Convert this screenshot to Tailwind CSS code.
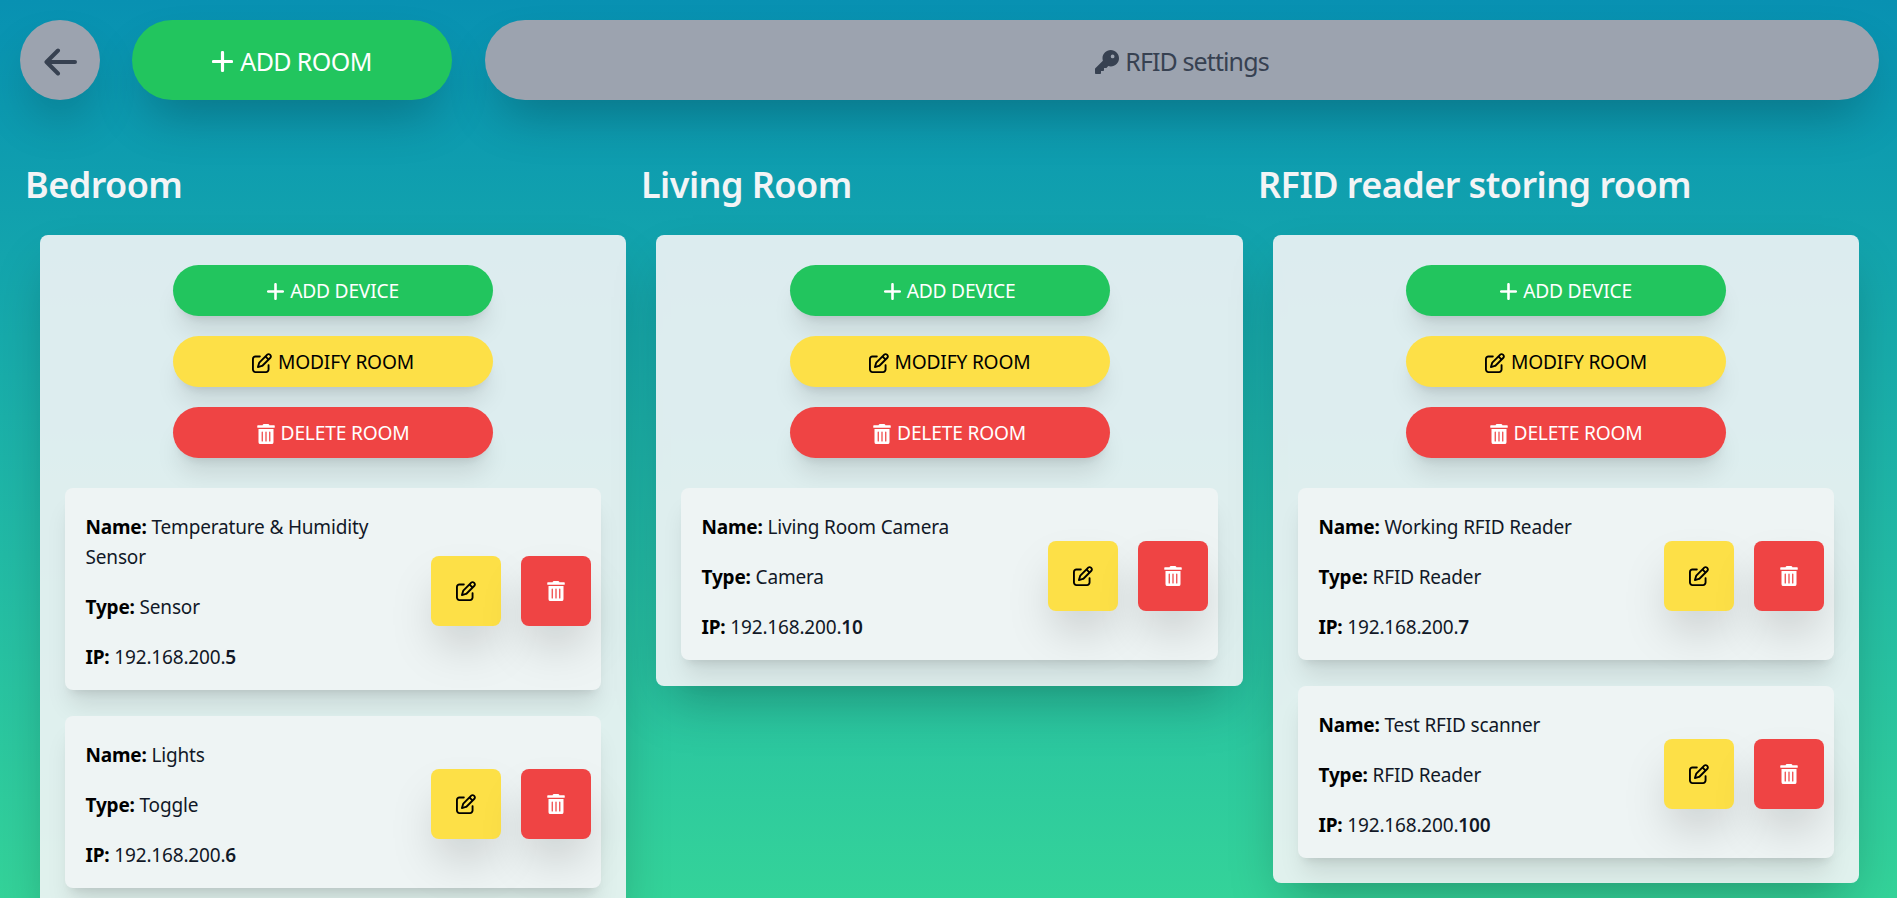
<!DOCTYPE html>
<html lang="en">
<head>
    <meta charset="UTF-8">
    <title>Rooms</title>
    <script src="https://cdn.jsdelivr.net/npm/@tailwindcss/browser@4"></script>
</head>
<body class="h-[898px] overflow-hidden bg-gradient-to-b from-[#0891b2] to-[#34d399] font-['Noto_Sans',sans-serif]">

    <!-- Shared icons -->
    <svg class="hidden">
        <symbol id="plus" viewBox="0 0 21 21"><path d="M10.500 1.500V19.500M1.500 10.500H19.500" fill="none" stroke="currentColor" stroke-width="3.200" stroke-linecap="round"/></symbol>
        <symbol id="edit" viewBox="0 0 512 512"><path fill="currentColor" d="M441 58.900L453.100 71c9.400 9.400 9.400 24.600 0 33.900L424 134.100 377.900 88 407 58.900c9.400-9.400 24.600-9.400 33.900 0zM209.800 256.200L344 121.900 390.100 168 255.800 302.200c-2.900 2.900-6.500 5-10.400 6.100l-58.500 16.700 16.700-58.500c1.100-3.900 3.200-7.500 6.100-10.400zM373.100 25L175.800 222.200c-8.700 8.700-15 19.400-18.300 31.100l-28.600 100c-2.400 8.400-.1 17.400 6.100 23.600s15.200 8.500 23.600 6.100l100-28.600c11.800-3.400 22.500-9.700 31.100-18.300L487 138.900c28.100-28.100 28.100-73.700 0-101.800L474.900 25C446.800-3.100 401.200-3.100 373.100 25zM88 64C39.400 64 0 103.400 0 152V424c0 48.600 39.400 88 88 88H360c48.600 0 88-39.400 88-88V312c0-13.300-10.700-24-24-24s-24 10.700-24 24V424c0 22.100-17.900 40-40 40H88c-22.100 0-40-17.900-40-40V152c0-22.100 17.900-40 40-40H200c13.300 0 24-10.700 24-24s-10.700-24-24-24H88z"/></symbol>
        <symbol id="trash" viewBox="0 0 448 512"><path fill="currentColor" d="M32 464a48 48 0 0 0 48 48h288a48 48 0 0 0 48-48V128H32zm272-256a16 16 0 0 1 32 0v224a16 16 0 0 1-32 0zm-96 0a16 16 0 0 1 32 0v224a16 16 0 0 1-32 0zm-96 0a16 16 0 0 1 32 0v224a16 16 0 0 1-32 0zM432 32H312l-9.400-18.700A24 24 0 0 0 281.100 0H166.800a23.720 23.720 0 0 0-21.400 13.300L136 32H16A16 16 0 0 0 0 48v32a16 16 0 0 0 16 16h416a16 16 0 0 0 16-16V48a16 16 0 0 0-16-16z"/></symbol>
    </svg>

    <!-- Top bar -->
    <div class="flex gap-8 pt-5 pl-5 pr-[18px]">
        <button class="w-20 h-20 shrink-0 rounded-full bg-[#9ca3af] shadow-2xl flex items-center justify-center pt-[4px]">
            <svg class="w-[33px] h-[28px] text-[#374151]" viewBox="0 0 33 28" fill="none" stroke="currentColor" stroke-width="4" stroke-linecap="round" stroke-linejoin="round"><path d="M31 14H3M14 2.500L2.500 14L14 25.500"/></svg>
        </button>
        <button class="w-80 h-20 shrink-0 rounded-full bg-[#22c55e] text-white text-[25px] shadow-2xl flex items-center justify-center gap-[7px] pt-[3px]">
            <svg class="w-[21px] h-[21px]"><use href="#plus"/></svg>
            <span class="tracking-[-0.6px]">ADD ROOM</span>
        </button>
        <button class="grow h-20 ml-px rounded-full bg-[#9ca3af] text-[#374151] text-[25px] shadow-2xl flex items-center justify-center gap-[6px] pt-[3px]">
            <svg class="w-6 h-6" viewBox="0 0 512 512" fill="currentColor"><path d="M336 352c97.200 0 176-78.800 176-176S433.200 0 336 0S160 78.800 160 176c0 18.700 2.900 36.800 8.300 53.700L7 391c-4.500 4.500-7 10.600-7 17v80c0 13.300 10.700 24 24 24h80c13.300 0 24-10.700 24-24V448h40c13.300 0 24-10.700 24-24V384h40c6.400 0 12.500-2.500 17-7l33.300-33.300c16.900 5.400 35 8.300 53.700 8.300zM376 96a40 40 0 1 1 0 80 40 40 0 1 1 0-80z"/></svg>
            <span class="tracking-[-0.9px]">RFID settings</span>
        </button>
    </div>

    <!-- Rooms -->
    <div class="grid grid-cols-[616px_617px_617px] items-start pl-[25px] mt-[58px]">

        <!-- Bedroom -->
        <div>
            <h2 class="text-4xl leading-[54px] font-semibold text-[#f3f4f6] tracking-[-0.55px]">Bedroom</h2>
            <div class="w-[586px] ml-[15px] mt-[23px] p-[25px] pt-[30px] rounded-lg bg-[#f3f4f6]/90 shadow-2xl">
                <div class="flex flex-col items-center gap-5">
                    <button class="w-80 h-[51px] rounded-full bg-[#22c55e] text-white text-[19.2px] shadow-xl flex items-center justify-center gap-[6px] pt-[2px]"><svg class="w-[17px] h-[17px]"><use href="#plus"/></svg><span class="tracking-[-0.2px]">ADD DEVICE</span></button>
                    <button class="w-80 h-[51px] rounded-full bg-[#fde047] text-black text-[19.2px] shadow-xl flex items-center justify-center gap-[6px] pt-[2px]"><svg class="w-5 h-5"><use href="#edit"/></svg><span class="tracking-[-0.2px]">MODIFY ROOM</span></button>
                    <button class="w-80 h-[51px] rounded-full bg-[#ef4444] text-white text-[19.2px] shadow-xl flex items-center justify-center gap-[6px] pt-[2px]"><svg class="w-[18px] h-5"><use href="#trash"/></svg><span class="tracking-[-0.2px]">DELETE ROOM</span></button>
                </div>
                <div class="mt-[30px] flex flex-col gap-[26px]">
                    <div class="flex items-center justify-between rounded-lg bg-[#eef4f4] shadow-xl pl-[20.5px] pr-[10px] pt-[24px] pb-[18px]">
                        <div class="w-[335px] flex flex-col gap-5 text-[19px] leading-[30px] text-[#111827] tracking-[-0.17px]">
                            <p><b class="font-bold text-black">Name:</b> Temperature &amp; Humidity<br>Sensor</p>
                            <p><b class="font-bold text-black">Type:</b> Sensor</p>
                            <p><b class="font-bold text-black">IP:</b> 192.168.200.<span class="font-semibold">5</span></p>
                        </div>
                        <div class="flex gap-5 -mt-[3px]">
                            <button class="w-[70px] h-[70px] rounded-lg bg-[#fde047] text-black shadow-2xl flex items-center justify-center"><svg class="w-5 h-5"><use href="#edit"/></svg></button>
                            <button class="w-[70px] h-[70px] rounded-lg bg-[#ef4444] text-white shadow-2xl flex items-center justify-center"><svg class="w-[18px] h-5"><use href="#trash"/></svg></button>
                        </div>
                    </div>
                    <div class="flex items-center justify-between rounded-lg bg-[#eef4f4] shadow-xl pl-[20.5px] pr-[10px] pt-[24px] pb-[18px]">
                        <div class="w-[335px] flex flex-col gap-5 text-[19px] leading-[30px] text-[#111827] tracking-[-0.17px]">
                            <p><b class="font-bold text-black">Name:</b> Lights</p>
                            <p><b class="font-bold text-black">Type:</b> Toggle</p>
                            <p><b class="font-bold text-black">IP:</b> 192.168.200.<span class="font-semibold">6</span></p>
                        </div>
                        <div class="flex gap-5 -mt-[3px]">
                            <button class="w-[70px] h-[70px] rounded-lg bg-[#fde047] text-black shadow-2xl flex items-center justify-center"><svg class="w-5 h-5"><use href="#edit"/></svg></button>
                            <button class="w-[70px] h-[70px] rounded-lg bg-[#ef4444] text-white shadow-2xl flex items-center justify-center"><svg class="w-[18px] h-5"><use href="#trash"/></svg></button>
                        </div>
                    </div>
                </div>
            </div>
        </div>

        <!-- Living Room -->
        <div>
            <h2 class="text-4xl leading-[54px] font-semibold text-[#f3f4f6] tracking-[-0.55px]">Living Room</h2>
            <div class="w-[587px] ml-[15px] mt-[23px] p-[25px] pt-[30px] pb-[26px] rounded-lg bg-[#f3f4f6]/90 shadow-2xl">
                <div class="flex flex-col items-center gap-5">
                    <button class="w-80 h-[51px] rounded-full bg-[#22c55e] text-white text-[19.2px] shadow-xl flex items-center justify-center gap-[6px] pt-[2px]"><svg class="w-[17px] h-[17px]"><use href="#plus"/></svg><span class="tracking-[-0.2px]">ADD DEVICE</span></button>
                    <button class="w-80 h-[51px] rounded-full bg-[#fde047] text-black text-[19.2px] shadow-xl flex items-center justify-center gap-[6px] pt-[2px]"><svg class="w-5 h-5"><use href="#edit"/></svg><span class="tracking-[-0.2px]">MODIFY ROOM</span></button>
                    <button class="w-80 h-[51px] rounded-full bg-[#ef4444] text-white text-[19.2px] shadow-xl flex items-center justify-center gap-[6px] pt-[2px]"><svg class="w-[18px] h-5"><use href="#trash"/></svg><span class="tracking-[-0.2px]">DELETE ROOM</span></button>
                </div>
                <div class="mt-[30px] flex flex-col gap-[26px]">
                    <div class="flex items-center justify-between rounded-lg bg-[#eef4f4] shadow-xl pl-[20.5px] pr-[10px] pt-[24px] pb-[18px]">
                        <div class="w-[335px] flex flex-col gap-5 text-[19px] leading-[30px] text-[#111827] tracking-[-0.17px]">
                            <p><b class="font-bold text-black">Name:</b> Living Room Camera</p>
                            <p><b class="font-bold text-black">Type:</b> Camera</p>
                            <p><b class="font-bold text-black">IP:</b> 192.168.200.<span class="font-semibold">10</span></p>
                        </div>
                        <div class="flex gap-5 -mt-[3px]">
                            <button class="w-[70px] h-[70px] rounded-lg bg-[#fde047] text-black shadow-2xl flex items-center justify-center"><svg class="w-5 h-5"><use href="#edit"/></svg></button>
                            <button class="w-[70px] h-[70px] rounded-lg bg-[#ef4444] text-white shadow-2xl flex items-center justify-center"><svg class="w-[18px] h-5"><use href="#trash"/></svg></button>
                        </div>
                    </div>
                </div>
            </div>
        </div>

        <!-- RFID reader storing room -->
        <div>
            <h2 class="text-4xl leading-[54px] font-semibold text-[#f3f4f6] tracking-[-0.55px]">RFID reader storing room</h2>
            <div class="w-[586px] ml-[15px] mt-[23px] p-[25px] pt-[30px] rounded-lg bg-[#f3f4f6]/90 shadow-2xl">
                <div class="flex flex-col items-center gap-5">
                    <button class="w-80 h-[51px] rounded-full bg-[#22c55e] text-white text-[19.2px] shadow-xl flex items-center justify-center gap-[6px] pt-[2px]"><svg class="w-[17px] h-[17px]"><use href="#plus"/></svg><span class="tracking-[-0.2px]">ADD DEVICE</span></button>
                    <button class="w-80 h-[51px] rounded-full bg-[#fde047] text-black text-[19.2px] shadow-xl flex items-center justify-center gap-[6px] pt-[2px]"><svg class="w-5 h-5"><use href="#edit"/></svg><span class="tracking-[-0.2px]">MODIFY ROOM</span></button>
                    <button class="w-80 h-[51px] rounded-full bg-[#ef4444] text-white text-[19.2px] shadow-xl flex items-center justify-center gap-[6px] pt-[2px]"><svg class="w-[18px] h-5"><use href="#trash"/></svg><span class="tracking-[-0.2px]">DELETE ROOM</span></button>
                </div>
                <div class="mt-[30px] flex flex-col gap-[26px]">
                    <div class="flex items-center justify-between rounded-lg bg-[#eef4f4] shadow-xl pl-[20.5px] pr-[10px] pt-[24px] pb-[18px]">
                        <div class="w-[335px] flex flex-col gap-5 text-[19px] leading-[30px] text-[#111827] tracking-[-0.17px]">
                            <p><b class="font-bold text-black">Name:</b> Working RFID Reader</p>
                            <p><b class="font-bold text-black">Type:</b> RFID Reader</p>
                            <p><b class="font-bold text-black">IP:</b> 192.168.200.<span class="font-semibold">7</span></p>
                        </div>
                        <div class="flex gap-5 -mt-[3px]">
                            <button class="w-[70px] h-[70px] rounded-lg bg-[#fde047] text-black shadow-2xl flex items-center justify-center"><svg class="w-5 h-5"><use href="#edit"/></svg></button>
                            <button class="w-[70px] h-[70px] rounded-lg bg-[#ef4444] text-white shadow-2xl flex items-center justify-center"><svg class="w-[18px] h-5"><use href="#trash"/></svg></button>
                        </div>
                    </div>
                    <div class="flex items-center justify-between rounded-lg bg-[#eef4f4] shadow-xl pl-[20.5px] pr-[10px] pt-[24px] pb-[18px]">
                        <div class="w-[335px] flex flex-col gap-5 text-[19px] leading-[30px] text-[#111827] tracking-[-0.17px]">
                            <p><b class="font-bold text-black">Name:</b> Test RFID scanner</p>
                            <p><b class="font-bold text-black">Type:</b> RFID Reader</p>
                            <p><b class="font-bold text-black">IP:</b> 192.168.200.<span class="font-semibold">100</span></p>
                        </div>
                        <div class="flex gap-5 -mt-[3px]">
                            <button class="w-[70px] h-[70px] rounded-lg bg-[#fde047] text-black shadow-2xl flex items-center justify-center"><svg class="w-5 h-5"><use href="#edit"/></svg></button>
                            <button class="w-[70px] h-[70px] rounded-lg bg-[#ef4444] text-white shadow-2xl flex items-center justify-center"><svg class="w-[18px] h-5"><use href="#trash"/></svg></button>
                        </div>
                    </div>
                </div>
            </div>
        </div>

    </div>
</body>
</html>
